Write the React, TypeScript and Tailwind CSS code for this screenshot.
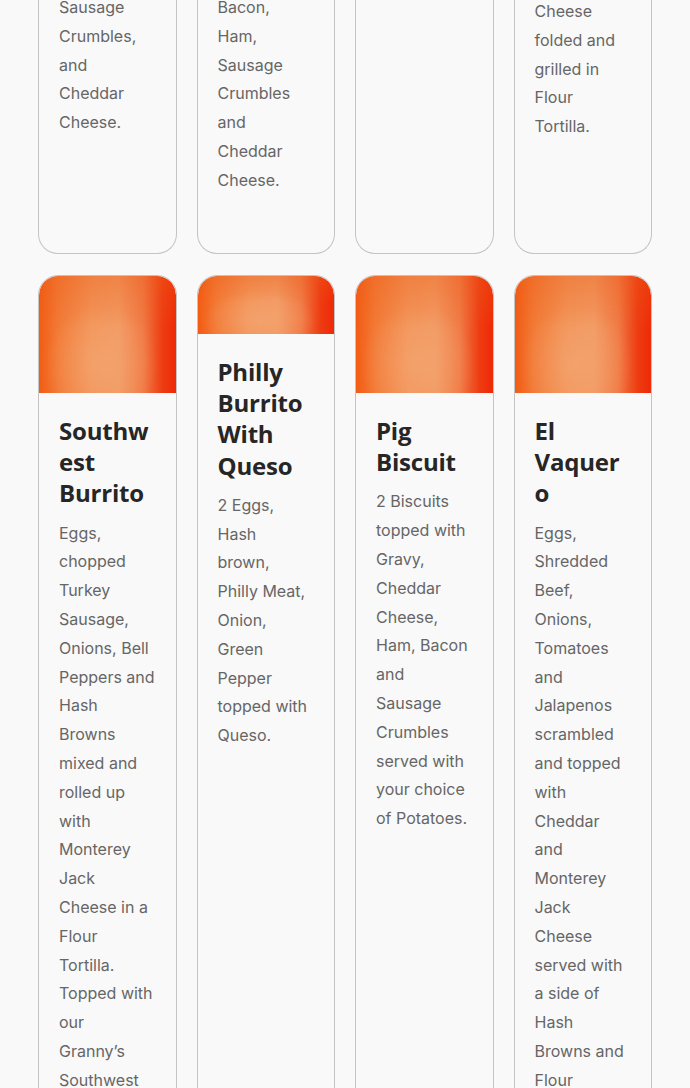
const heading = "font-['Open_Sans',sans-serif] text-[24px] leading-[31.2px] font-bold text-[#262626] tracking-[-0.2px]";
const body = "font-['Inter',sans-serif] text-[16px] leading-[28.8px] text-[#666666] whitespace-pre-line";
const photo =
  "bg-[radial-gradient(ellipse_60%_70%_at_45%_75%,rgba(245,170,120,0.55),transparent_70%),linear-gradient(180deg,rgba(236,90,20,0.35)_0%,rgba(236,90,20,0)_45%),linear-gradient(90deg,#f25c14_0%,#f27a36_14%,#f2955a_38%,#f29a63_58%,#f07a45_76%,#ee3c12_90%,#ee2a06_100%)]";

type Item = { title: React.ReactNode; text: string; short?: boolean };

// bottom of the previous row, scrolled partly out of view
const tails = [
  { text: "Sausage Crumbles, and Cheddar Cheese.", offset: "-mt-[7px]" },
  { text: "Bacon,\nHam, Sausage Crumbles and Cheddar Cheese.", offset: "-mt-[7px]" },
  { text: "", offset: "" },
  { text: "Cheese folded and grilled in Flour Tortilla.", offset: "-mt-[3px]" },
];

const items: Item[] = [
  {
    title: <>Southw<wbr />est Burrito</>,
    text: "Eggs, chopped Turkey Sausage, Onions, Bell Peppers and Hash Browns mixed and rolled up with Monterey Jack Cheese in a Flour Tortilla. Topped with our\nGranny’s Southwest Gravy and Pico de Gallo.",
  },
  {
    title: "Philly Burrito With Queso",
    text: "2 Eggs, Hash\nbrown, Philly Meat, Onion, Green Pepper topped with Queso.",
    short: true,
  },
  {
    title: "Pig Biscuit",
    text: "2 Biscuits topped with Gravy, Cheddar Cheese, Ham, Bacon and Sausage Crumbles served with your choice of Potatoes.",
  },
  {
    title: <>El Vaquer<wbr />o</>,
    text: "Eggs, Shredded Beef, Onions, Tomatoes and Jalapenos scrambled and topped with Cheddar and Monterey Jack Cheese served with a side of Hash Browns and Flour Tortillas.",
  },
];

export default function App() {
  return (
    <div className="h-[1088px] overflow-hidden bg-[#f9f9f9] px-[38px]">
      <div className="grid grid-cols-4 gap-x-5">
        {tails.map((t, i) => (
          <div key={i} className="h-[254px] overflow-hidden rounded-b-[20px] border-x border-b border-[#c4c4c4] px-5">
            <p className={`${body} ${t.offset} break-words`}>{t.text}</p>
          </div>
        ))}
      </div>

      <div className="mt-[21px] grid grid-cols-4 items-start gap-x-5">
        {items.map((it, i) => (
          <div key={i} className="min-h-[900px] overflow-hidden rounded-t-[20px] border border-[#c4c4c4]">
            <div className={`${it.short ? "h-[58px]" : "h-[117px]"} rounded-t-[19px] ${photo}`} />
            <div className="px-5 pt-[22px]">
              <h3 className={heading}>{it.title}</h3>
              <p className={`${body} mt-[10px]`}>{it.text}</p>
            </div>
          </div>
        ))}
      </div>
    </div>
  );
}
